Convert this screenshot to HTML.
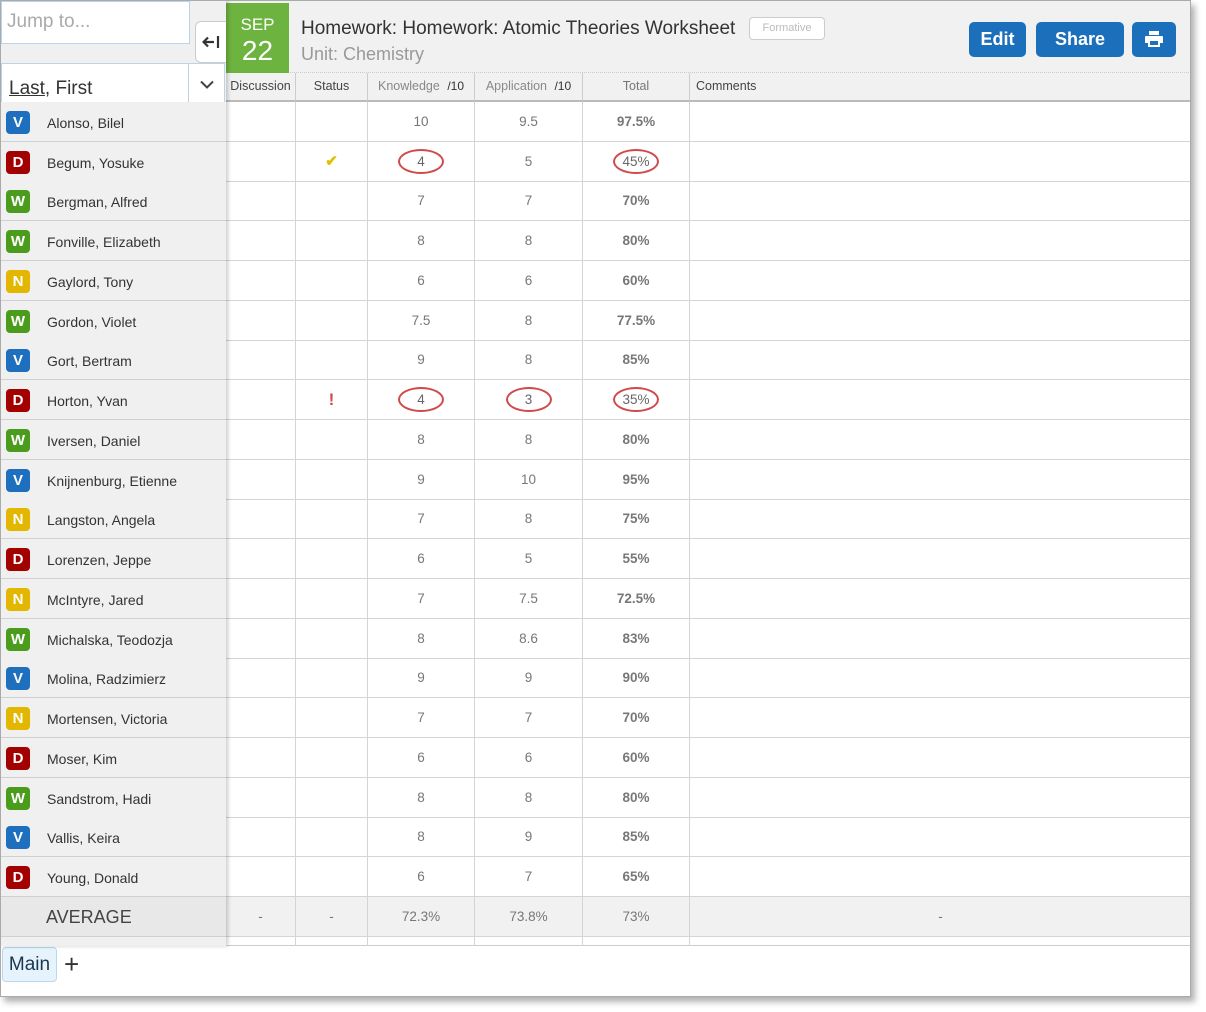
<!DOCTYPE html>
<html><head><meta charset="utf-8"><style>
*{box-sizing:border-box;margin:0;padding:0}
body{width:1206px;height:1012px;background:#fff;font-family:"Liberation Sans",sans-serif;position:relative;overflow:hidden}
.frame{position:absolute;left:0;top:0;width:1191px;height:997px;background:#fff;box-shadow:4px 5px 6px rgba(0,0,0,.3);overflow:hidden}
.bord{position:absolute;left:0;top:0;width:1191px;height:997px;border:1px solid #aaa;z-index:10;pointer-events:none}
.hdr{position:absolute;left:226px;top:0;width:965px;height:73px;background:#f1f1f1;border-bottom:1px dotted #ccc}
.date{position:absolute;left:226px;top:3px;width:63px;height:70px;background:#6db33f;color:#fff;text-align:center}
.left{position:absolute;left:0;top:0;width:226px;height:946px;background:#f0f0f0;box-shadow:2px 0 4px rgba(0,0,0,.2);z-index:2}
.jump{position:absolute;left:1px;top:1px;width:189px;height:43px;background:#fff;border:1px solid #bcd3e8;color:#aaa;font-size:19px;padding:9px 5px}
.sort{position:absolute;left:1px;top:63px;width:224px;height:43px;background:#fff;border:1px solid #bcd3e8;font-size:19px;color:#333;padding:14px 7px}
.collapse{position:absolute;left:195px;top:21px;width:31px;height:42px;background:#fff;border:1px solid #ccc;border-right:none;border-radius:6px 0 0 6px;z-index:3;text-align:center}
.colh{position:absolute;top:73px;height:29px;font-size:12.5px;color:#444;text-align:center;line-height:26px;border-right:1px solid #ccc;background:#f1f1f1;border-bottom:2px solid #bbb}
.row{position:absolute;left:0;width:1191px;height:40px;border-bottom:1px solid #d4d4d4}
.nm{position:absolute;left:0;top:0;width:226px;height:40px;border-bottom:1px solid #d0d0d0;font-size:14px;color:#333;z-index:3;background:#f0f0f0}
.nm b{position:absolute;left:6px;top:9px;width:24px;height:23px;border-radius:4px;color:#fff;font-size:15px;text-align:center;line-height:23px}
.nm span{position:absolute;left:47px;top:13px}
.c{position:absolute;top:0;height:39px;border-right:1px solid #d4d4d4;text-align:center;line-height:40px;font-size:13.5px;color:#777}
.V{background:#1f6fbf}.D{background:#a30000}.W{background:#4b9c1c}.N{background:#e3b600}
.circ{display:inline-block;border:2px solid #d04a4a;border-radius:50%;width:46px;line-height:21px;color:#666}
.btn{position:absolute;top:22px;height:35px;background:#1c70bb;color:#fff;border-radius:5px;font-weight:bold;font-size:18px;text-align:center;line-height:35px}
</style></head><body>
<div class="frame">
<div class="hdr"></div>
<div class="date"><div style="font-size:17px;margin-top:12px">SEP</div><div style="font-size:28px;margin-top:0px">22</div></div>
<div style="position:absolute;left:301px;top:18px;font-size:19px;color:#333">Homework: Homework: Atomic Theories Worksheet</div>
<div style="position:absolute;left:749px;top:17px;width:76px;height:23px;border:1px solid #ccc;border-radius:4px;background:#fff;color:#bbb;font-size:11px;text-align:center;line-height:21px">Formative</div>
<div style="position:absolute;left:301px;top:44px;font-size:18px;color:#999">Unit: Chemistry</div>
<div class="btn" style="left:969px;width:57px">Edit</div>
<div class="btn" style="left:1036px;width:88px">Share</div>
<div class="btn" style="left:1132px;width:44px"><svg width="20" height="18" viewBox="0 0 20 18" style="margin-top:8px"><path d="M5 1h10v4H5z M2 6h16a1 1 0 0 1 1 1v6h-3v4H4v-4H1V7a1 1 0 0 1 1-1z" fill="#fff"/><rect x="6" y="11" width="8" height="4" fill="#1c70bb"/></svg></div>

<div class="colh" style="left:226px;width:70px">Discussion</div>
<div class="colh" style="left:296px;width:72px">Status</div>
<div class="colh" style="left:368px;width:107px;color:#888">Knowledge <span style="color:#333;font-size:12px;margin-left:4px">/10</span></div>
<div class="colh" style="left:475px;width:108px;color:#888">Application <span style="color:#333;font-size:12px;margin-left:4px">/10</span></div>
<div class="colh" style="left:583px;width:107px;color:#777">Total</div>
<div class="colh" style="left:690px;width:501px;text-align:left;padding-left:6px;border-right:none">Comments</div>

<div class="left"></div>
<div class="jump" style="z-index:3">Jump to...</div>
<div class="collapse"><svg width="18" height="16" viewBox="0 0 18 16" style="margin-top:12px"><path d="M12 8H2M6 3.5L1.5 8 6 12.5M16 2v12" stroke="#333" stroke-width="2.2" fill="none"/></svg></div>
<div class="sort" style="z-index:3"><u>Last</u>, First<span style="position:absolute;left:186px;top:0;height:41px;border-left:1px solid #bcd3e8;width:36px;text-align:center"><svg width="14" height="9" viewBox="0 0 14 9" style="margin-top:16px"><path d="M1 1.5l6 6 6-6" stroke="#444" stroke-width="2" fill="none"/></svg></span></div>

<div class="row" style="top:102px"><div class="nm"><b class="V">V</b><span>Alonso, Bilel</span></div><div class="c" style="left:226px;width:70px"></div><div class="c" style="left:296px;width:72px"></div><div class="c" style="left:368px;width:107px">10</div><div class="c" style="left:475px;width:108px">9.5</div><div class="c" style="left:583px;width:107px;font-weight:bold">97.5%</div></div>
<div class="row" style="top:142px"><div class="nm"><b class="D">D</b><span>Begum, Yosuke</span></div><div class="c" style="left:226px;width:70px"></div><div class="c" style="left:296px;width:72px;color:#e0c000;font-size:15px;font-weight:bold">&#10004;</div><div class="c" style="left:368px;width:107px"><span class="circ">4</span></div><div class="c" style="left:475px;width:108px">5</div><div class="c" style="left:583px;width:107px"><span class="circ">45%</span></div></div>
<div class="row" style="top:181px"><div class="nm"><b class="W">W</b><span>Bergman, Alfred</span></div><div class="c" style="left:226px;width:70px"></div><div class="c" style="left:296px;width:72px"></div><div class="c" style="left:368px;width:107px">7</div><div class="c" style="left:475px;width:108px">7</div><div class="c" style="left:583px;width:107px;font-weight:bold">70%</div></div>
<div class="row" style="top:221px"><div class="nm"><b class="W">W</b><span>Fonville, Elizabeth</span></div><div class="c" style="left:226px;width:70px"></div><div class="c" style="left:296px;width:72px"></div><div class="c" style="left:368px;width:107px">8</div><div class="c" style="left:475px;width:108px">8</div><div class="c" style="left:583px;width:107px;font-weight:bold">80%</div></div>
<div class="row" style="top:261px"><div class="nm"><b class="N">N</b><span>Gaylord, Tony</span></div><div class="c" style="left:226px;width:70px"></div><div class="c" style="left:296px;width:72px"></div><div class="c" style="left:368px;width:107px">6</div><div class="c" style="left:475px;width:108px">6</div><div class="c" style="left:583px;width:107px;font-weight:bold">60%</div></div>
<div class="row" style="top:301px"><div class="nm"><b class="W">W</b><span>Gordon, Violet</span></div><div class="c" style="left:226px;width:70px"></div><div class="c" style="left:296px;width:72px"></div><div class="c" style="left:368px;width:107px">7.5</div><div class="c" style="left:475px;width:108px">8</div><div class="c" style="left:583px;width:107px;font-weight:bold">77.5%</div></div>
<div class="row" style="top:340px"><div class="nm"><b class="V">V</b><span>Gort, Bertram</span></div><div class="c" style="left:226px;width:70px"></div><div class="c" style="left:296px;width:72px"></div><div class="c" style="left:368px;width:107px">9</div><div class="c" style="left:475px;width:108px">8</div><div class="c" style="left:583px;width:107px;font-weight:bold">85%</div></div>
<div class="row" style="top:380px"><div class="nm"><b class="D">D</b><span>Horton, Yvan</span></div><div class="c" style="left:226px;width:70px"></div><div class="c" style="left:296px;width:72px;color:#d04a4a;font-weight:bold;font-size:17px">!</div><div class="c" style="left:368px;width:107px"><span class="circ">4</span></div><div class="c" style="left:475px;width:108px"><span class="circ">3</span></div><div class="c" style="left:583px;width:107px"><span class="circ">35%</span></div></div>
<div class="row" style="top:420px"><div class="nm"><b class="W">W</b><span>Iversen, Daniel</span></div><div class="c" style="left:226px;width:70px"></div><div class="c" style="left:296px;width:72px"></div><div class="c" style="left:368px;width:107px">8</div><div class="c" style="left:475px;width:108px">8</div><div class="c" style="left:583px;width:107px;font-weight:bold">80%</div></div>
<div class="row" style="top:460px"><div class="nm"><b class="V">V</b><span>Knijnenburg, Etienne</span></div><div class="c" style="left:226px;width:70px"></div><div class="c" style="left:296px;width:72px"></div><div class="c" style="left:368px;width:107px">9</div><div class="c" style="left:475px;width:108px">10</div><div class="c" style="left:583px;width:107px;font-weight:bold">95%</div></div>
<div class="row" style="top:499px"><div class="nm"><b class="N">N</b><span>Langston, Angela</span></div><div class="c" style="left:226px;width:70px"></div><div class="c" style="left:296px;width:72px"></div><div class="c" style="left:368px;width:107px">7</div><div class="c" style="left:475px;width:108px">8</div><div class="c" style="left:583px;width:107px;font-weight:bold">75%</div></div>
<div class="row" style="top:539px"><div class="nm"><b class="D">D</b><span>Lorenzen, Jeppe</span></div><div class="c" style="left:226px;width:70px"></div><div class="c" style="left:296px;width:72px"></div><div class="c" style="left:368px;width:107px">6</div><div class="c" style="left:475px;width:108px">5</div><div class="c" style="left:583px;width:107px;font-weight:bold">55%</div></div>
<div class="row" style="top:579px"><div class="nm"><b class="N">N</b><span>McIntyre, Jared</span></div><div class="c" style="left:226px;width:70px"></div><div class="c" style="left:296px;width:72px"></div><div class="c" style="left:368px;width:107px">7</div><div class="c" style="left:475px;width:108px">7.5</div><div class="c" style="left:583px;width:107px;font-weight:bold">72.5%</div></div>
<div class="row" style="top:619px"><div class="nm"><b class="W">W</b><span>Michalska, Teodozja</span></div><div class="c" style="left:226px;width:70px"></div><div class="c" style="left:296px;width:72px"></div><div class="c" style="left:368px;width:107px">8</div><div class="c" style="left:475px;width:108px">8.6</div><div class="c" style="left:583px;width:107px;font-weight:bold">83%</div></div>
<div class="row" style="top:658px"><div class="nm"><b class="V">V</b><span>Molina, Radzimierz</span></div><div class="c" style="left:226px;width:70px"></div><div class="c" style="left:296px;width:72px"></div><div class="c" style="left:368px;width:107px">9</div><div class="c" style="left:475px;width:108px">9</div><div class="c" style="left:583px;width:107px;font-weight:bold">90%</div></div>
<div class="row" style="top:698px"><div class="nm"><b class="N">N</b><span>Mortensen, Victoria</span></div><div class="c" style="left:226px;width:70px"></div><div class="c" style="left:296px;width:72px"></div><div class="c" style="left:368px;width:107px">7</div><div class="c" style="left:475px;width:108px">7</div><div class="c" style="left:583px;width:107px;font-weight:bold">70%</div></div>
<div class="row" style="top:738px"><div class="nm"><b class="D">D</b><span>Moser, Kim</span></div><div class="c" style="left:226px;width:70px"></div><div class="c" style="left:296px;width:72px"></div><div class="c" style="left:368px;width:107px">6</div><div class="c" style="left:475px;width:108px">6</div><div class="c" style="left:583px;width:107px;font-weight:bold">60%</div></div>
<div class="row" style="top:778px"><div class="nm"><b class="W">W</b><span>Sandstrom, Hadi</span></div><div class="c" style="left:226px;width:70px"></div><div class="c" style="left:296px;width:72px"></div><div class="c" style="left:368px;width:107px">8</div><div class="c" style="left:475px;width:108px">8</div><div class="c" style="left:583px;width:107px;font-weight:bold">80%</div></div>
<div class="row" style="top:817px"><div class="nm"><b class="V">V</b><span>Vallis, Keira</span></div><div class="c" style="left:226px;width:70px"></div><div class="c" style="left:296px;width:72px"></div><div class="c" style="left:368px;width:107px">8</div><div class="c" style="left:475px;width:108px">9</div><div class="c" style="left:583px;width:107px;font-weight:bold">85%</div></div>
<div class="row" style="top:857px"><div class="nm"><b class="D">D</b><span>Young, Donald</span></div><div class="c" style="left:226px;width:70px"></div><div class="c" style="left:296px;width:72px"></div><div class="c" style="left:368px;width:107px">6</div><div class="c" style="left:475px;width:108px">7</div><div class="c" style="left:583px;width:107px;font-weight:bold">65%</div></div>
<div class="row" style="top:897px;background:#f1f1f1;height:40px"><div class="nm" style="background:#e8e8e8;"><span style="left:46px;top:10px;font-size:18px;color:#444">AVERAGE</span></div><div class="c" style="left:226px;width:70px">-</div><div class="c" style="left:296px;width:72px">-</div><div class="c" style="left:368px;width:107px">72.3%</div><div class="c" style="left:475px;width:108px">73.8%</div><div class="c" style="left:583px;width:107px">73%</div><div class="c" style="left:690px;width:501px;border:none">-</div></div>
<div class="row" style="top:937px;height:9px;border-bottom:1px solid #ccc"><div class="c" style="left:226px;width:70px;height:9px"></div><div class="c" style="left:296px;width:72px;height:9px"></div><div class="c" style="left:368px;width:107px;height:9px"></div><div class="c" style="left:475px;width:108px;height:9px"></div><div class="c" style="left:583px;width:107px;height:9px"></div></div>
<div style="position:absolute;left:2px;top:947px;width:55px;height:35px;background:#e6f3fc;border:1px solid #b8d8f0;border-radius:4px;font-size:19px;color:#1a3550;text-align:center;line-height:34px">Main</div>
<div style="position:absolute;left:64px;top:949px;font-size:26px;color:#333;line-height:30px">+</div>
<div class="bord"></div>
</div>
</body></html>
